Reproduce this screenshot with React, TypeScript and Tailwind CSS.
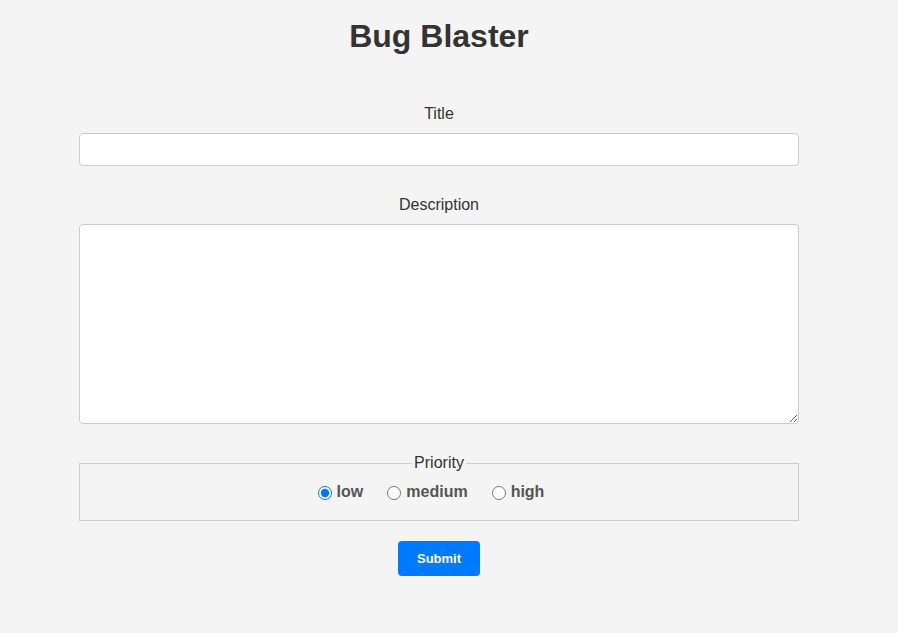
import { useState } from 'react';

const priorities = ['low', 'medium', 'high'];

export default function App() {
  const [priority, setPriority] = useState('low');

  return (
    <div className="min-h-screen w-full bg-[#f4f4f4] font-['Liberation_Sans',Arial,sans-serif] text-[#333]">
      <div className="w-[878px]">
        <h1 className="pt-[18px] text-center text-[32px] font-bold leading-[37px] text-[#333]">Bug Blaster</h1>
        <form className="mx-auto mt-[50px] w-[720px]" onSubmit={(e) => e.preventDefault()}>
          <label className="block text-center text-base leading-[18px] text-[#333]">Title</label>
          <input
            type="text"
            className="mt-[10px] block h-[33px] w-full rounded-[4px] border border-[#ccc] bg-white px-2 text-base outline-none"
          />
          <label className="mt-[30px] block text-center text-base leading-[18px] text-[#333]">Description</label>
          <textarea className="mt-[10px] block h-[200px] w-full resize-y rounded-[4px] border border-[#ccc] bg-white p-2 text-base outline-none" />
          <fieldset className="mt-[30px] border border-[#ccc] px-2 pb-[18px] pt-[10px]">
            <legend className="mx-auto px-[2px] text-base leading-[18px] text-[#333]">Priority</legend>
            <div className="flex h-[20px] items-center justify-center gap-[24px] pr-[16px]">
              {priorities.map((p) => (
                <label key={p} className="flex items-center text-base font-bold text-[#555]">
                  <input
                    type="radio"
                    name="priority"
                    checked={priority === p}
                    onChange={() => setPriority(p)}
                    className="m-0 mr-[5px] mt-[2px] h-[14px] w-[14px] accent-[#0075ff]"
                  />
                  {p}
                </label>
              ))}
            </div>
          </fieldset>
          <div className="mt-[20px] flex justify-center">
            <button
              type="submit"
              className="h-[35px] w-[82px] rounded-[4px] bg-[#007bff] text-[13px] font-bold text-white"
            >
              Submit
            </button>
          </div>
        </form>
      </div>
    </div>
  );
}
